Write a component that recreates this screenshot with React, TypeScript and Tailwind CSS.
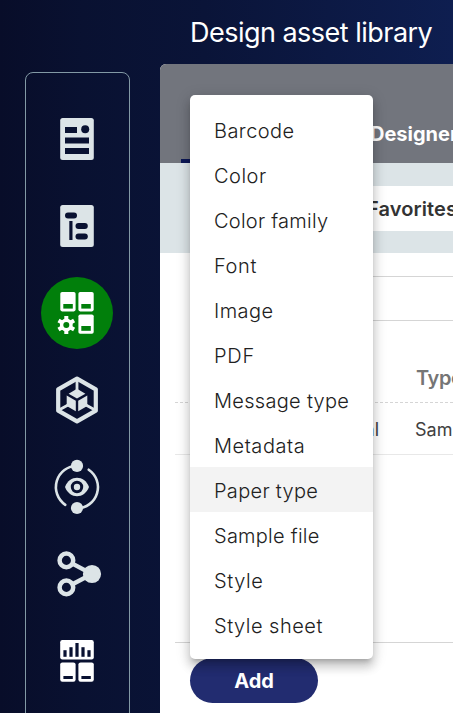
import type { ReactNode } from "react";

const menuItems = [
  { label: "Barcode", spacing: "tracking-[0.45px]" },
  { label: "Color", spacing: "tracking-[0.5px]" },
  { label: "Color family", spacing: "tracking-[0.25px]" },
  { label: "Font", spacing: "tracking-[0.6px]" },
  { label: "Image", spacing: "tracking-[0.45px]" },
  { label: "PDF", spacing: "tracking-[0.8px]" },
  { label: "Message type", spacing: "tracking-[0.3px]" },
  { label: "Metadata", spacing: "tracking-[0.55px]" },
  { label: "Paper type", spacing: "tracking-[0.3px]" },
  { label: "Sample file", spacing: "tracking-[0.25px]" },
  { label: "Style", spacing: "tracking-[0.6px]" },
  { label: "Style sheet", spacing: "tracking-[0.5px]" },
];

function NavIcon({ children, className = "text-[#dce4e7]" }: { children: ReactNode; className?: string }) {
  return (
    <button className={`size-[72px] shrink-0 rounded-full ${className}`}>
      <svg viewBox="0 0 72 72" className="size-[72px]" fill="currentColor">
        {children}
      </svg>
    </button>
  );
}

const dark = "#091131";

function Sidebar() {
  return (
    <nav className="mt-[72px] ml-[25px] flex h-[700px] w-[105px] shrink-0 flex-col items-start gap-[15px] rounded-lg border border-[#8299a5] pt-[30px] pl-[15px]">
      <NavIcon>
        <rect x="19.2" y="15" width="33.6" height="42" rx="2.5" />
        <g fill={dark}>
          <rect x="24" y="24" width="12" height="6" />
          <circle cx="44.2" cy="26.2" r="4" />
          <rect x="24" y="34.5" width="24" height="6" />
          <rect x="24" y="45" width="24" height="6" />
        </g>
      </NavIcon>
      <NavIcon>
        <rect x="19.2" y="15" width="33.6" height="42" rx="2.5" />
        <g fill={dark}>
          <rect x="24" y="22.5" width="12" height="6" rx="3" />
          <rect x="28.3" y="31" width="3.2" height="19" />
          <rect x="34.5" y="33" width="12.3" height="6" rx="3" />
          <rect x="34.5" y="43.5" width="12.3" height="6" rx="3" />
        </g>
      </NavIcon>
      <NavIcon className="bg-[#017f0b] text-white">
        <rect x="19.3" y="15" width="15.3" height="19.4" rx="1.8" />
        <rect x="37.4" y="15" width="15.3" height="19.4" rx="1.8" />
        <rect x="37.4" y="37.4" width="15.3" height="19.4" rx="1.8" />
        <g fill="#017f0b">
          <rect x="22.3" y="27" width="9.5" height="4.6" />
          <rect x="40.3" y="27" width="9.5" height="4.6" />
          <rect x="40.3" y="49" width="9.5" height="4.8" />
        </g>
        <g stroke="currentColor" strokeWidth="4">
          <path d="M25.3 39v18M17.5 43.5l15.6 9M17.5 52.5l15.6-9" />
        </g>
        <circle cx="25.3" cy="48" r="6.4" />
        <circle cx="25.3" cy="48" r="3" fill="#017f0b" />
      </NavIcon>
      <NavIcon>
        <path d="M36 14.6 54.8 25.3v21.4L36 57.4 17.2 46.7V25.3Z" fill="none" stroke="currentColor" strokeWidth="4.2" strokeLinejoin="round" />
        <path d="m36 24.8 8.4 5-8.4 4.8-8.4-4.8ZM25.7 31.5l9.1 5.3v10.4l-9.1-5.2ZM46.3 31.5l-9.1 5.3v10.4l9.1-5.2Z" />
        <path d="M36 16v10M27 41l-9 5M45 41l9 5" fill="none" stroke="currentColor" strokeWidth="2.8" />
      </NavIcon>
      <NavIcon>
        <g fill="none" stroke="currentColor" strokeWidth="2.6" strokeLinecap="round">
          <path d="M36 14.7A21.4 21.4 0 0 0 24.3 53.8M47.7 18.7A21.2 21.2 0 0 1 36 57.4" />
        </g>
        <circle cx="36" cy="14.9" r="6.1" />
        <circle cx="36" cy="57" r="6.1" />
        <path d="M24 36C28.5 23.7 43.5 23.7 48 36 43.5 48.3 28.5 48.3 24 36Z" />
        <circle cx="36" cy="36" r="4.7" fill="none" stroke={dark} strokeWidth="3" />
      </NavIcon>
      <NavIcon>
        <path d="M25.3 22.3 51 36 25.3 49.5" fill="none" stroke="currentColor" strokeWidth="4.3" />
        <g fill={dark} stroke="currentColor" strokeWidth="4.5">
          <circle cx="25.4" cy="22.4" r="6.8" />
          <circle cx="25.4" cy="49.4" r="6.8" />
        </g>
        <circle cx="51" cy="36" r="9.1" />
      </NavIcon>
      <NavIcon className="text-white">
        <rect x="19.2" y="15" width="33.6" height="19.4" rx="2.2" />
        <rect x="19.2" y="37.4" width="15.4" height="19.4" rx="2.2" />
        <rect x="37.4" y="37.4" width="15.4" height="19.4" rx="2.2" />
        <g fill={dark}>
          <rect x="22.4" y="25.2" width="3.2" height="6.6" />
          <rect x="28.4" y="22.2" width="3.2" height="9.6" />
          <rect x="34.4" y="18" width="3.2" height="13.8" />
          <rect x="40.4" y="22.2" width="3.2" height="9.6" />
          <rect x="46.4" y="25.2" width="3.2" height="6.6" />
          <rect x="22.4" y="51" width="9.4" height="3" />
          <rect x="40.4" y="51" width="9.4" height="3" />
        </g>
      </NavIcon>
    </nav>
  );
}

function Menu() {
  return (
    <ul className="absolute top-[95px] left-[190px] w-[183px] rounded-[5px] bg-white py-3 shadow-[0_5px_5px_-3px_rgba(0,0,0,0.2),0_8px_10px_1px_rgba(0,0,0,0.14),0_3px_14px_2px_rgba(0,0,0,0.12)]">
      {menuItems.map(({ label, spacing }) => (
        <li
          key={label}
          className={`h-[45px] pl-6 text-[20px] leading-[49px] font-[350] whitespace-nowrap text-[#212121] ${spacing} ${label === "Paper type" ? "bg-[#f3f3f3]" : ""}`}
        >
          {label}
        </li>
      ))}
    </ul>
  );
}

export default function App() {
  return (
    <div className="relative flex h-[713px] w-[453px] overflow-hidden bg-[linear-gradient(90deg,#080d29_0%,#091131_18%,#0a1438_45%,#0e1e50_100%)] font-['Inter',sans-serif]">
      <Sidebar />
      <div className="ml-[30px] flex w-[293px] shrink-0 flex-col">
        <h1 className="h-16 pl-[30px] text-[27px] leading-[65px] tracking-[-0.52px] whitespace-nowrap text-white">Design asset library</h1>
        <main className="flex grow flex-col overflow-hidden rounded-tl-[6px] bg-white">
          <div className="flex h-[99px] shrink-0 items-end bg-[#72757d] pl-[21px]">
            <div className="h-1 w-[100px] shrink-0 bg-[#0c1755]" />
            <span className="ml-[89px] h-[43px] shrink-0 text-[20px] leading-[29px] font-bold text-white">Designer</span>
          </div>
          <div className="h-[90px] shrink-0 bg-[#dce4e7] pt-[23px] pl-[50px]">
            <div className="h-[45px] bg-white pl-[157px] text-[20px] leading-[46px] font-semibold tracking-[0.1px] text-[#333]">Favorites</div>
          </div>
          <div className="mt-[23px] ml-[50px] h-[45px] shrink-0 border-y border-[#d5d5d5]" />
          <div className="ml-[15px] flex h-[81px] shrink-0 items-end pl-[241px] text-[20px] font-semibold tracking-[-0.4px] text-[#757575]">
            <span className="h-[39px] leading-[30px]">Type</span>
          </div>
          <div className="ml-[15px] h-px shrink-0 bg-[repeating-linear-gradient(90deg,#d5d5d5_0_3px,transparent_3px_5px)]" />
          <div className="ml-[15px] flex h-[52px] shrink-0 justify-end border-b border-[#e8e8e8] text-[18px] leading-[54px] whitespace-nowrap text-[#404040]">
            <span className="mr-[36px]">al</span>
            <span className="w-[38px]">Sample</span>
          </div>
          <div className="mt-[187px] ml-[15px] h-px shrink-0 bg-[#d5d5d5]" />
          <button className="mt-[15px] ml-[30px] h-[45px] w-32 shrink-0 rounded-full bg-[#222c70] text-[20px] leading-[46px] font-bold text-white">Add</button>
        </main>
      </div>
      <Menu />
    </div>
  );
}
